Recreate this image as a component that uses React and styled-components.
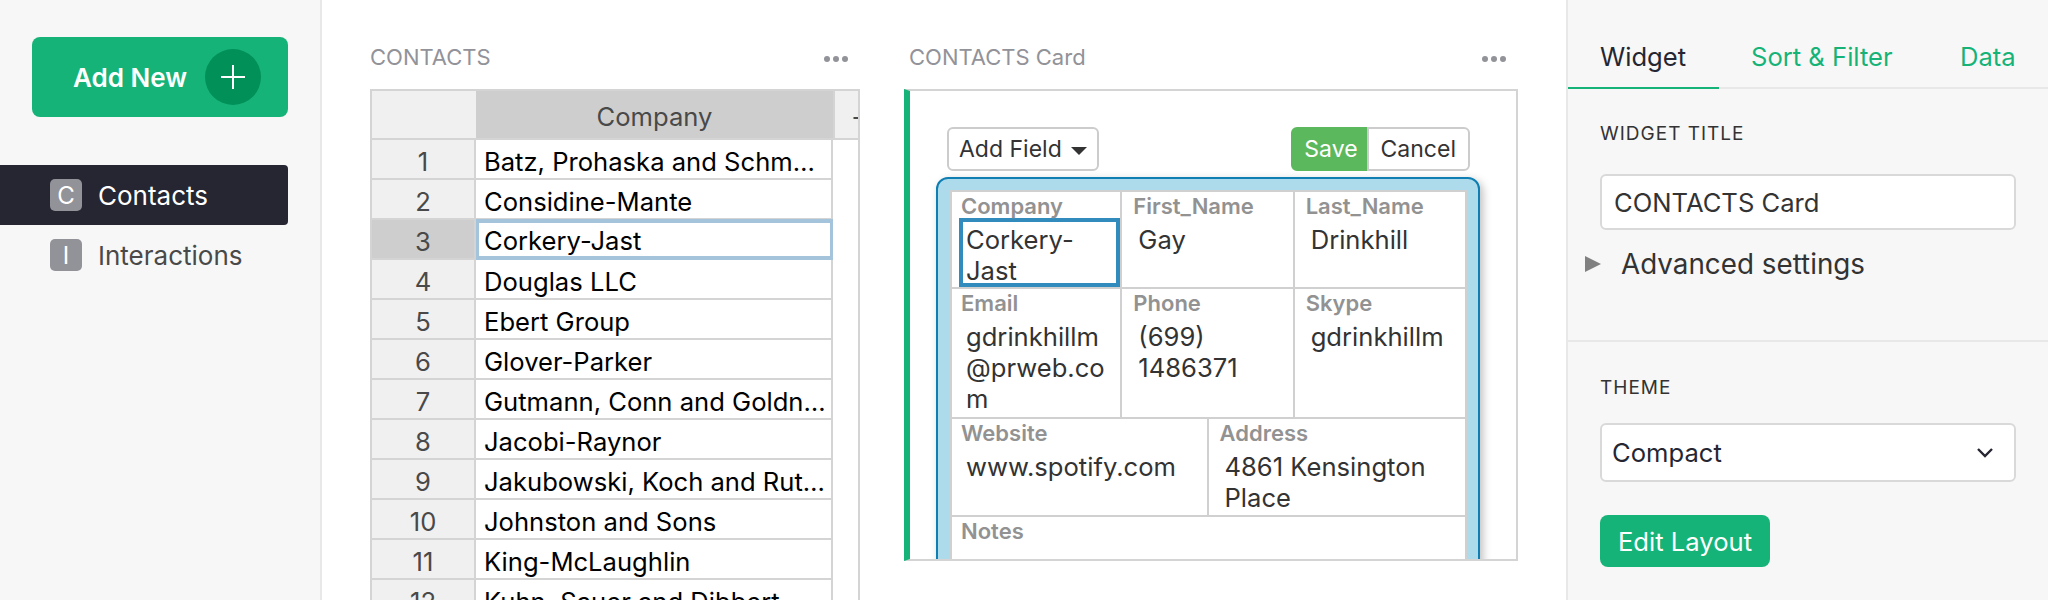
import React from 'react'
import styled, { createGlobalStyle } from 'styled-components'

const GlobalStyle = createGlobalStyle`
  html, body {
    margin: 0;
    padding: 0;
    background: #fff;
    font-family: Inter, "Liberation Sans", sans-serif;
  }
  * { box-sizing: border-box; }
`

const Page = styled.div`
  display: grid;
  grid-template-columns: 322px 1244px 482px;
  width: 2048px;
  height: 600px;
  overflow: hidden;
`

/* left panel */
const LeftPanel = styled.aside`
  background: #f7f7f7;
  border-right: 2px solid #e8e8e8;
  padding-top: 37px;
`

const AddNew = styled.div`
  display: flex;
  align-items: center;
  justify-content: flex-end;
  gap: 18px;
  width: 256px;
  height: 80px;
  margin: 0 0 48px 32px;
  padding-right: 27px;
  background: #16b378;
  border-radius: 8px;
  color: #fff;
  font-size: 26px;
  font-weight: 600;
`

const PlusCircle = styled.span`
  display: flex;
  align-items: center;
  justify-content: center;
  width: 56px;
  height: 56px;
  border-radius: 50%;
  background: #009058;
`

const NavRow = styled.div`
  display: flex;
  align-items: center;
  gap: 16px;
  width: 288px;
  height: 60px;
  padding-left: 50px;
  border-radius: 0 4px 4px 0;
  font-size: 26px;
  background: ${p => (p.$active ? '#262633' : 'transparent')};
  color: ${p => (p.$active ? '#fff' : '#494949')};
`

const NavIcon = styled.span`
  display: flex;
  align-items: center;
  justify-content: center;
  width: 32px;
  height: 32px;
  border-radius: 5px;
  background: #929299;
  color: #fff;
  font-size: 24px;
`

/* middle */
const Main = styled.main`
  display: flex;
  gap: 44px;
  padding-left: 48px;
`

const Section = styled.section`
  width: ${p => p.$width}px;
  flex: none;
`

const TitleRow = styled.div`
  display: flex;
  align-items: center;
  justify-content: space-between;
  height: 32px;
  margin: 41px 0 16px;
  padding: 0 12px 0 ${p => p.$indent || 0}px;
  color: #929299;
  font-size: 22px;
`

const Dots = styled.span`
  display: flex;
  gap: 3px;
  margin-top: 4px;
  & > i {
    width: 6px;
    height: 6px;
    border-radius: 50%;
    background: #929299;
  }
`

const Table = styled.div`
  border: solid #d4d4d4;
  border-width: 2px 2px 0;
  height: 511px;
  overflow: hidden;
`

const HeadRow = styled.div`
  display: flex;
  height: 49px;
  border-bottom: 2px solid #d4d4d4;
`

const Corner = styled.div`
  width: 104px;
  background: #f0f0f0;
`

const HeadCell = styled.div`
  display: flex;
  align-items: center;
  justify-content: center;
  width: 357px;
  padding-top: 3px;
  background: #cecece;
  color: #494949;
  font-size: 25.6px;
`

const AddCol = styled.div`
  flex: 1;
  min-width: 0;
  overflow: hidden;
  padding-left: 16px;
  border-left: 2px solid #d4d4d4;
  background: #f0f0f0;
  color: #494949;
  font-size: 26px;
  line-height: 50px;
`

const Row = styled.div`
  display: flex;
  height: 40px;
`

const NumCell = styled.div`
  display: flex;
  align-items: center;
  justify-content: center;
  width: 104px;
  flex: none;
  padding-top: 5px;
  background: ${p => (p.$selected ? '#cecece' : '#f0f0f0')};
  border-bottom: 2px solid #d4d4d4;
  border-right: 2px solid #d4d4d4;
  color: #494949;
  font-size: 25.6px;
`

const NameCell = styled.div`
  width: 357px;
  flex: none;
  height: 40px;
  padding: 0 2px 0 ${p => (p.$focused ? 5 : 8)}px;
  border-right: 2px solid #d4d4d4;
  border-bottom: 2px solid #d4d4d4;
  color: #000;
  font-size: 25.6px;
  line-height: 43px;
  white-space: nowrap;
  overflow: hidden;
  text-overflow: ellipsis;
  ${p => p.$focused && 'border: solid #a3c4da; border-width: 4px 3px; line-height: 36px; margin-top: -1px; height: 41px;'}
`

/* card section */
const Card = styled.div`
  height: 472px;
  padding: 36px 0 0 26px;
  border: solid #d4d4d4;
  border-width: 2px 2px 2px 0;
  border-left: 6px solid #16b378;
  overflow: hidden;
`

const Toolbar = styled.div`
  display: flex;
  justify-content: space-between;
  width: 534px;
  height: 44px;
  margin-bottom: 6px;
  padding-left: 11px;
`

const ToolButton = styled.div`
  display: flex;
  align-items: center;
  gap: 9px;
  height: 44px;
  padding: ${p => p.$padding || '0 10px'};
  border: 2px solid ${p => (p.$save ? '#5cb85c' : '#ccc')};
  background: ${p => (p.$save ? '#5cb85c' : '#fff')};
  color: ${p => (p.$save ? '#fff' : '#333')};
  font-size: 23px;
  border-radius: ${p => p.$radius || '6px'};
`

const ButtonGroup = styled.div`
  display: flex;
`

const Caret = styled.i`
  width: 0;
  height: 0;
  margin-top: 3px;
  border-left: 8px solid transparent;
  border-right: 8px solid transparent;
  border-top: 8px solid #333;
`

const LayoutBox = styled.div`
  width: 544px;
  height: 400px;
  padding: 11px 11px 0 12px;
  background: #aedbec;
  border: 2px solid #0f7fb3;
  border-radius: 12px;
  box-shadow: 3px 3px 8px rgba(0, 0, 0, 0.25);
`

const FormGrid = styled.div`
  border: solid #d0d0d0;
  border-width: 2px 2px 0;
  background: #fff;
  height: 400px;
`

const FormRow = styled.div`
  display: flex;
  height: ${p => p.$height}px;
  border-bottom: 2px solid #d0d0d0;
`

const FormCell = styled.div`
  flex: 1;
  min-width: 0;
  padding: 1px 0 0 9px;
  border-right: 2px solid #d0d0d0;
  & + & { padding-left: 11px; }
  &:last-child { border-right: 0; }
`

const FieldLabel = styled.div`
  height: 26px;
  color: #929292;
  font-size: 22px;
  font-weight: 600;
  line-height: 26px;
`

const FieldValue = styled.div`
  height: ${p => (p.$focused ? '69px' : 'auto')};
  margin: -1px 0 0 -2px;
  padding: 2px 3px 0;
  border: 4px solid ${p => (p.$focused ? '#318bbd' : 'transparent')};
  color: #333;
  font-size: 25.6px;
  line-height: 31px;
  white-space: nowrap;
`

/* right panel */
const RightPanel = styled.aside`
  background: #f7f7f7;
  border-left: 2px solid #e8e8e8;
`

const Tabs = styled.div`
  display: flex;
  height: 89px;
  padding-top: 37px;
  border-bottom: 2px solid #e8e8e8;
  font-size: 25.6px;
  line-height: 40px;
`

const Tab = styled.div`
  width: ${p => p.$width}px;
  flex: none;
  height: 52px;
  padding-left: ${p => p.$indent}px;
  color: ${p => (p.$active ? '#262633' : '#16b378')};
  border-bottom: 2px solid ${p => (p.$active ? '#16b378' : 'transparent')};
`

const SettingsBlock = styled.div`
  height: ${p => p.$height}px;
  padding-top: ${p => p.$top}px;
  border-bottom: ${p => (p.$divider ? '2px solid #e8e8e8' : '0')};
`

const SectionLabel = styled.div`
  margin-left: 32px;
  height: 26px;
  color: #333;
  font-size: 19px;
  line-height: 26px;
  letter-spacing: 1px;
`

const TextBox = styled.div`
  display: flex;
  align-items: center;
  justify-content: space-between;
  width: 416px;
  height: ${p => p.$height}px;
  margin: ${p => p.$top}px 0 0 32px;
  padding: 0 20px 0 ${p => p.$indent}px;
  background: #fff;
  border: 2px solid #d9d9d9;
  border-radius: 6px;
  color: ${p => (p.$dark ? '#262633' : '#333')};
  font-size: 25.6px;
`

const Advanced = styled.div`
  display: flex;
  align-items: center;
  gap: 20px;
  margin: 14px 0 0 17px;
  color: #333;
  font-size: 27.8px;
  line-height: 40px;
`

const Triangle = styled.i`
  width: 0;
  height: 0;
  border-top: 8px solid transparent;
  border-bottom: 8px solid transparent;
  border-left: 16px solid #808080;
`

const EditLayout = styled.div`
  display: flex;
  align-items: center;
  justify-content: center;
  width: 170px;
  height: 52px;
  margin: 33px 0 0 32px;
  background: #16b378;
  border-radius: 8px;
  color: #fff;
  font-size: 25.6px;
`

const companies = [
  'Batz, Prohaska and Schmeler',
  'Considine-Mante',
  'Corkery-Jast',
  'Douglas LLC',
  'Ebert Group',
  'Glover-Parker',
  'Gutmann, Conn and Goldnerson',
  'Jacobi-Raynor',
  'Jakubowski, Koch and Rutherford',
  'Johnston and Sons',
  'King-McLaughlin',
  'Kuhn, Sauer and Dibbert',
]

const formRows = [
  {
    height: 97,
    cells: [
      { label: 'Company', lines: ['Corkery-', 'Jast'], focused: true },
      { label: 'First_Name', lines: ['Gay'] },
      { label: 'Last_Name', lines: ['Drinkhill'] },
    ],
  },
  {
    height: 130,
    cells: [
      { label: 'Email', lines: ['gdrinkhillm', '@prweb.co', 'm'] },
      { label: 'Phone', lines: ['(699)', '1486371'] },
      { label: 'Skype', lines: ['gdrinkhillm'] },
    ],
  },
  {
    height: 98,
    cells: [
      { label: 'Website', lines: ['www.spotify.com'] },
      { label: 'Address', lines: ['4861 Kensington', 'Place'] },
    ],
  },
  {
    height: 60,
    cells: [{ label: 'Notes', lines: [] }],
  },
]

const MoreDots = () => (
  <Dots>
    <i />
    <i />
    <i />
  </Dots>
)

export default function App() {
  return (
    <Page>
      <GlobalStyle />
      <LeftPanel>
        <AddNew>
          Add New
          <PlusCircle>
            <svg width="24" height="24" viewBox="0 0 24 24" stroke="#fff" strokeWidth="2">
              <path d="M12 0v24M0 12h24" />
            </svg>
          </PlusCircle>
        </AddNew>
        <NavRow $active>
          <NavIcon>C</NavIcon>
          Contacts
        </NavRow>
        <NavRow>
          <NavIcon>I</NavIcon>
          Interactions
        </NavRow>
      </LeftPanel>

      <Main>
        <Section $width={490}>
          <TitleRow>
            CONTACTS
            <MoreDots />
          </TitleRow>
          <Table>
            <HeadRow>
              <Corner />
              <HeadCell>Company</HeadCell>
              <AddCol>+</AddCol>
            </HeadRow>
            {companies.map((name, i) => (
              <Row key={name}>
                <NumCell $selected={i === 2}>{i + 1}</NumCell>
                <NameCell $focused={i === 2}>{name}</NameCell>
              </Row>
            ))}
          </Table>
        </Section>

        <Section $width={614}>
          <TitleRow $indent={5}>
            CONTACTS Card
            <MoreDots />
          </TitleRow>
          <Card>
            <Toolbar>
              <ToolButton>
                Add Field
                <Caret />
              </ToolButton>
              <ButtonGroup>
                <ToolButton $save $padding="0 7px 0 11px" $radius="6px 0 0 6px">Save</ToolButton>
                <ToolButton $padding="0 12px" $radius="0 6px 6px 0">Cancel</ToolButton>
              </ButtonGroup>
            </Toolbar>
            <LayoutBox>
              <FormGrid>
                {formRows.map(row => (
                  <FormRow key={row.cells[0].label} $height={row.height}>
                    {row.cells.map(cell => (
                      <FormCell key={cell.label}>
                        <FieldLabel>{cell.label}</FieldLabel>
                        <FieldValue $focused={cell.focused}>
                          {cell.lines.map(line => (
                            <div key={line}>{line}</div>
                          ))}
                        </FieldValue>
                      </FormCell>
                    ))}
                  </FormRow>
                ))}
              </FormGrid>
            </LayoutBox>
          </Card>
        </Section>
      </Main>

      <RightPanel>
        <Tabs>
          <Tab $active $width={151} $indent={32}>Widget</Tab>
          <Tab $width={241} $indent={32}>Sort &amp; Filter</Tab>
          <Tab $width={80} $indent={0}>Data</Tab>
        </Tabs>
        <SettingsBlock $divider $height={253} $top={32}>
          <SectionLabel>WIDGET TITLE</SectionLabel>
          <TextBox $height={56} $top={27} $indent={12}>CONTACTS Card</TextBox>
          <Advanced>
            <Triangle />
            Advanced settings
          </Advanced>
        </SettingsBlock>
        <SettingsBlock $height={258} $top={33}>
          <SectionLabel>THEME</SectionLabel>
          <TextBox $height={59} $top={22} $indent={10} $dark>
            Compact
            <svg width="18" height="12" viewBox="0 0 18 12" fill="none" stroke="#262633" strokeWidth="2.4">
              <path d="M2 2l7 7 7-7" />
            </svg>
          </TextBox>
          <EditLayout>Edit Layout</EditLayout>
        </SettingsBlock>
      </RightPanel>
    </Page>
  )
}
